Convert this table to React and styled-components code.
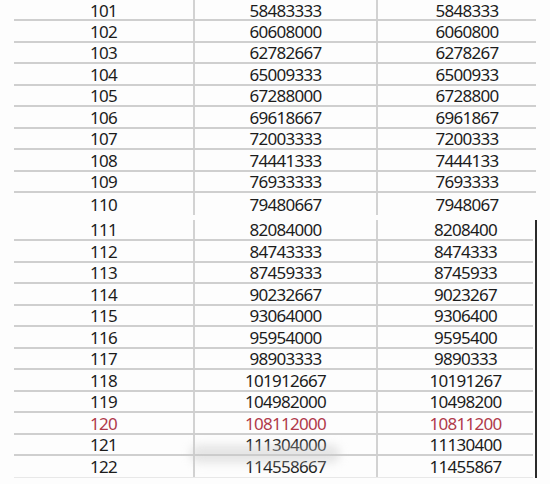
import React from "react";
import styled, { createGlobalStyle } from "styled-components";

const Global = createGlobalStyle`
  html, body { margin: 0; padding: 0; background: #ffffff; }
  body { width: 550px; height: 484px; overflow: hidden; }
`;

const Page = styled.div`
  position: relative;
  width: 550px;
  height: 484px;
  overflow: hidden;
  background: #fdfdfd;
  font-family: "Noto Sans", "Open Sans", sans-serif;
  display: flex;
  flex-direction: column;
  gap: 5px;
  padding: 0 0 0 14px;
  box-sizing: border-box;
`;

const Table = styled.div`
  display: flex;
  flex-direction: column;
  width: ${(p) => p.$width}px;
  box-sizing: border-box;
  ${(p) =>
    p.$framed &&
    `
    padding-right: 2px;
    border-right: 2px solid #2b2b2b;
    width: ${p.$width + 4}px;
  `}
`;

const Row = styled.div`
  display: grid;
  grid-template-columns: 179px 183px 1fr;
  height: ${(p) => (p.$first ? 21 : 21.5)}px;
  box-sizing: border-box;
  border-bottom: ${(p) => (p.$last ? (p.$faint ? "1px solid #e8e8e8" : "none") : "2px solid #cfcfcf")};
  color: ${(p) => (p.$hot ? "#b03a4a" : "#1c1c1c")};
`;

const Cell = styled.div`
  display: flex;
  align-items: center;
  justify-content: center;
  font-size: 17px;
  letter-spacing: -0.7px;
  line-height: 17px;
  box-sizing: border-box;
  padding-left: ${(p) => p.$shift || 0}px;
  border-left: ${(p) => (p.$divider ? "2px solid #d2d2d2" : "none")};
  padding-top: 1px;
`;

const Smudge = styled.div`
  position: absolute;
  left: 190px;
  top: 445px;
  width: 150px;
  height: 18px;
  border-radius: 10px;
  background: rgba(200, 200, 200, 0.45);
  filter: blur(5px);
`;

const top = [
  [101, 58483333, 5848333],
  [102, 60608000, 6060800],
  [103, 62782667, 6278267],
  [104, 65009333, 6500933],
  [105, 67288000, 6728800],
  [106, 69618667, 6961867],
  [107, 72003333, 7200333],
  [108, 74441333, 7444133],
  [109, 76933333, 7693333],
  [110, 79480667, 7948067],
];

const bottom = [
  [111, 82084000, 8208400],
  [112, 84743333, 8474333],
  [113, 87459333, 8745933],
  [114, 90232667, 9023267],
  [115, 93064000, 9306400],
  [116, 95954000, 9595400],
  [117, 98903333, 9890333],
  [118, 101912667, 10191267],
  [119, 104982000, 10498200],
  [120, 108112000, 10811200],
  [121, 111304000, 11130400],
  [122, 114558667, 11455867],
];

function Rows({ data, faintLast, shortFirst }) {
  return data.map(([a, b, c], i) => (
    <Row
      key={a}
      $first={shortFirst && i === 0}
      $last={i === data.length - 1}
      $faint={faintLast}
      $hot={a === 120}
    >
      <Cell>{a}</Cell>
      <Cell $divider>{b}</Cell>
      <Cell $divider $shift={20}>{c}</Cell>
    </Row>
  ));
}

export default function App() {
  return (
    <>
      <Global />
      <Page>
        <Table $width={522}>
          <Rows data={top} shortFirst />
        </Table>
        <Table $width={519} $framed>
          <Rows data={bottom} faintLast />
        </Table>
        <Smudge />
      </Page>
    </>
  );
}
